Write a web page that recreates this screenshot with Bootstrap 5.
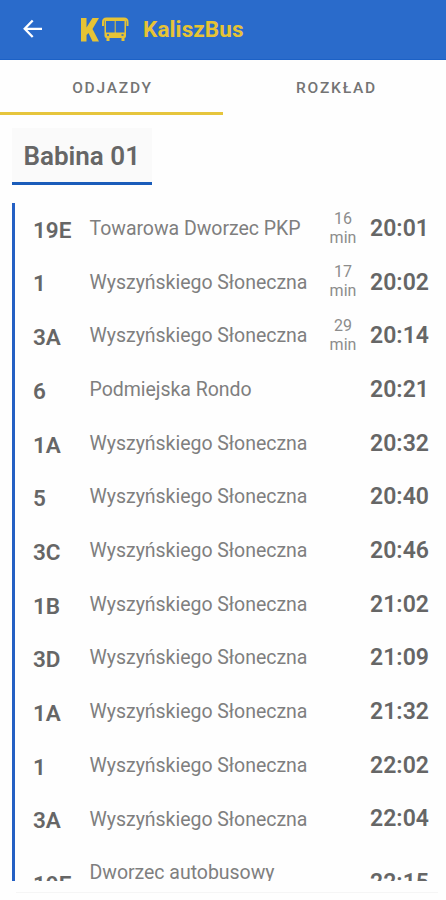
<!DOCTYPE html>
<html lang="pl">
<head>
<meta charset="utf-8">
<meta name="viewport" content="width=device-width, initial-scale=1">
<title>KaliszBus</title>
<link href="https://cdn.jsdelivr.net/npm/bootstrap@5.3.0/dist/css/bootstrap.min.css" rel="stylesheet">
<style>
body{font-family:Roboto,"Liberation Sans",sans-serif;color:#666;background:#fefefe;height:900px;overflow:hidden}
.topbar{height:60px;background:#2a6bcb;color:#e6c335;padding-left:23px;border-bottom:1px solid #1c61c6}
.back{margin-right:37px;margin-top:-2px}
.brand{font-size:22.5px;font-weight:700;letter-spacing:.1px;margin-left:14px;line-height:1}
.tabs{height:55px}
.tabs a{font-size:15.5px;font-weight:500;letter-spacing:1.8px;color:#747474;border-bottom:3px solid transparent;padding-top:6px;padding-left:4px}
.tabs a.active{border-color:#e6c53c;padding-left:2px}
.stop{margin:13px 0 0 12px;width:140px;height:57px;background:#fafafa;border-bottom:3px solid #1a5cba;font-size:26px;font-weight:600;letter-spacing:0;padding:4px 0 0 11.5px;white-space:nowrap}
.departures{margin:18px 0 0 12px;height:678px;border-left:3px solid #2460c4}
.departure{height:53.7px;flex:none;padding-left:18px}
.departure:first-child{margin-top:-1.2px}
.departure.tall{height:74px}
.departure.tall .dest{align-self:flex-start;padding-top:15px}
.line{width:56.5px;font-size:22.5px;font-weight:600;letter-spacing:0;padding-top:4px}
.dest{width:235px;font-size:19.5px;letter-spacing:-.03px;color:#7f7f7f;white-space:nowrap;line-height:1.2}
.wait{width:37px;font-size:16px;letter-spacing:0;line-height:19px;color:#8c8c8c;padding-bottom:2px}
.time{width:77px;font-size:23px;font-weight:600;letter-spacing:0;padding-left:8.6px;padding-top:1px}
.foot{height:1px;margin:11px 8px 0 16px;background:#f5f5f5}
</style>
<script src="https://cdn.jsdelivr.net/npm/bootstrap@5.3.0/dist/js/bootstrap.bundle.min.js"></script>
</head>
<body>
<header class="topbar d-flex align-items-center">
<svg class="back" width="20" height="20" viewBox="0 0 20 20" fill="none" stroke="#fff" stroke-width="2.3"><path d="M9.7 1.5 1.7 9.8l8 8.200M1.7 9.800H19"/></svg>
<svg width="49" height="26" viewBox="0 0 49 26" fill="#e6c335"><path d="M1 1h5.500v9.500L12.500 1H19l-6.500 11L19 24.500h-6.500L8.500 16l-2 2v6.500H1z"/><path d="M25 1h20v3H25zM24.500 3H26v13h-1.500zM44.500 3H46v13h-1.500zM34.700 4h1v12h-1zM24.500 15.500H46V19q0 2-1.500 2v3h-3v-3h-12v3h-3v-3q-2 0-2-2z"/><path d="M23 9V5q0-3.500 3.500-3.500h17.500q3.500 0 3.500 3.500v4" fill="none" stroke="#e6c335" stroke-width="2"/><path d="M27 17.300h2v1.500h-2zM41.500 17.300h2v1.500h-2z" fill="#2a6bcb"/></svg>
<span class="brand">KaliszBus</span>
</header>
<nav class="tabs d-flex text-center">
<a class="active w-50 d-flex align-items-center justify-content-center text-decoration-none" href="#">ODJAZDY</a>
<a class="w-50 d-flex align-items-center justify-content-center text-decoration-none" href="#">ROZKŁAD</a>
</nav>
<h1 class="stop d-flex align-items-center mb-0">Babina 01</h1>
<main class="departures d-flex flex-column overflow-hidden">
<div class="departure d-flex align-items-center"><span class="line">19E</span><span class="dest">Towarowa Dworzec PKP</span><span class="wait text-center">16<br>min</span><span class="time">20:01</span></div>
<div class="departure d-flex align-items-center"><span class="line">1</span><span class="dest">Wyszyńskiego Słoneczna</span><span class="wait text-center">17<br>min</span><span class="time">20:02</span></div>
<div class="departure d-flex align-items-center"><span class="line">3A</span><span class="dest">Wyszyńskiego Słoneczna</span><span class="wait text-center">29<br>min</span><span class="time">20:14</span></div>
<div class="departure d-flex align-items-center"><span class="line">6</span><span class="dest">Podmiejska Rondo</span><span class="wait"></span><span class="time">20:21</span></div>
<div class="departure d-flex align-items-center"><span class="line">1A</span><span class="dest">Wyszyńskiego Słoneczna</span><span class="wait"></span><span class="time">20:32</span></div>
<div class="departure d-flex align-items-center"><span class="line">5</span><span class="dest">Wyszyńskiego Słoneczna</span><span class="wait"></span><span class="time">20:40</span></div>
<div class="departure d-flex align-items-center"><span class="line">3C</span><span class="dest">Wyszyńskiego Słoneczna</span><span class="wait"></span><span class="time">20:46</span></div>
<div class="departure d-flex align-items-center"><span class="line">1B</span><span class="dest">Wyszyńskiego Słoneczna</span><span class="wait"></span><span class="time">21:02</span></div>
<div class="departure d-flex align-items-center"><span class="line">3D</span><span class="dest">Wyszyńskiego Słoneczna</span><span class="wait"></span><span class="time">21:09</span></div>
<div class="departure d-flex align-items-center"><span class="line">1A</span><span class="dest">Wyszyńskiego Słoneczna</span><span class="wait"></span><span class="time">21:32</span></div>
<div class="departure d-flex align-items-center"><span class="line">1</span><span class="dest">Wyszyńskiego Słoneczna</span><span class="wait"></span><span class="time">22:02</span></div>
<div class="departure d-flex align-items-center"><span class="line">3A</span><span class="dest">Wyszyńskiego Słoneczna</span><span class="wait"></span><span class="time">22:04</span></div>
<div class="departure tall d-flex align-items-center"><span class="line">19E</span><span class="dest">Dworzec autobusowy</span><span class="wait"></span><span class="time">22:15</span></div>
</main>
<div class="foot"></div>
</body>
</html>
